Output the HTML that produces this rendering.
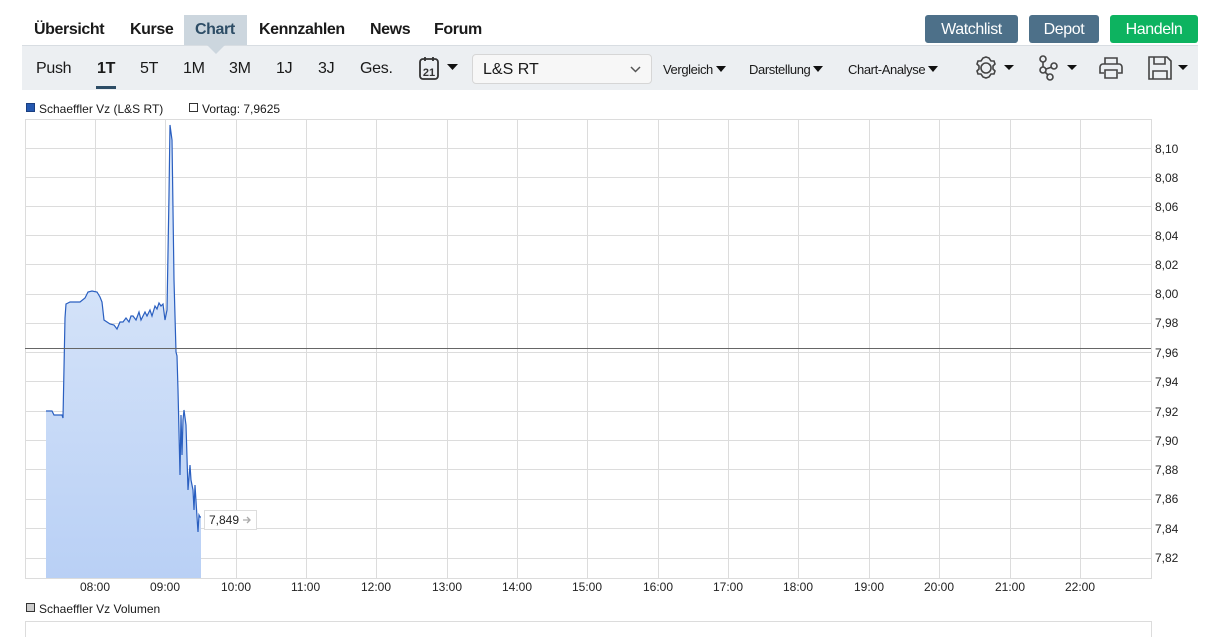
<!DOCTYPE html>
<html><head><meta charset="utf-8"><style>
*{margin:0;padding:0;box-sizing:border-box}
body{width:1208px;height:637px;background:#fff;font-family:"Liberation Sans",sans-serif;position:relative;overflow:hidden;color:#1a1a1a}
.a{position:absolute;white-space:nowrap}
.nav{font-size:16px;font-weight:bold;top:21px;letter-spacing:-0.4px}
.btn{top:15px;height:28px;border-radius:3px;color:#fff;font-size:16px;text-align:center;line-height:29px;letter-spacing:-0.4px}
.tb{top:60px;font-size:16px;letter-spacing:-0.3px}
.dd{top:62px;font-size:13px;letter-spacing:-0.4px}
.tri{display:inline-block;width:0;height:0;border-left:5px solid transparent;border-right:5px solid transparent;border-top:6px solid #111;margin-left:3px;vertical-align:2px}
.yl{font-size:12px;left:1155px;color:#222}
.xl{font-size:12px;top:580px;color:#222}
</style></head><body>
<div class="a" style="left:184px;top:15px;width:63px;height:31px;background:#ccd6de"></div>
<div class="a" style="left:207px;top:45px;width:0;height:0;border-left:9px solid transparent;border-right:9px solid transparent;border-top:9px solid #ccd6de;z-index:2"></div>
<div class="a nav" style="left:34px">Übersicht</div>
<div class="a nav" style="left:130px">Kurse</div>
<div class="a nav" style="left:195px;color:#2d4d66">Chart</div>
<div class="a nav" style="left:259px">Kennzahlen</div>
<div class="a nav" style="left:370px">News</div>
<div class="a nav" style="left:434px">Forum</div>
<div class="a btn" style="left:925px;width:93px;background:#4d7089">Watchlist</div>
<div class="a btn" style="left:1029px;width:70px;background:#4d7089">Depot</div>
<div class="a btn" style="left:1110px;width:88px;background:#0db360">Handeln</div>
<div class="a" style="left:22px;top:45px;width:1176px;height:45px;background:#eceff2;border-top:1px solid #d8dde2"></div>
<div class="a tb" style="left:36px">Push</div>
<div class="a tb" style="left:97px;font-weight:bold">1T</div>
<div class="a" style="left:96px;top:86px;width:20px;height:3px;background:#2d4d66"></div>
<div class="a tb" style="left:140px">5T</div>
<div class="a tb" style="left:183px">1M</div>
<div class="a tb" style="left:229px">3M</div>
<div class="a tb" style="left:276px">1J</div>
<div class="a tb" style="left:318px">3J</div>
<div class="a tb" style="left:360px">Ges.</div>
<svg class="a" style="left:418px;top:55px" width="45" height="28" viewBox="0 0 45 28"><rect x="2" y="4" width="18" height="20" rx="3" fill="none" stroke="#333" stroke-width="1.8"/><line x1="7" y1="2" x2="7" y2="6" stroke="#333" stroke-width="1.8"/><line x1="15" y1="2" x2="15" y2="6" stroke="#333" stroke-width="1.8"/><text x="11" y="21" font-size="11" font-weight="bold" text-anchor="middle" fill="#333" font-family="Liberation Sans">21</text><path d="M29 9h11l-5.5 6z" fill="#111"/></svg>
<div class="a" style="left:472px;top:54px;width:180px;height:30px;background:#f7f7f7;border:1px solid #d6d6d6;border-radius:4px;font-size:16px;line-height:29px;padding-left:10px">L&amp;S RT<svg style="position:absolute;right:10px;top:11px" width="11" height="7"><path d="M1 1l4.5 4.5L10 1" fill="none" stroke="#555" stroke-width="1.5"/></svg></div>
<div class="a dd" style="left:663px">Vergleich<span class="tri"></span></div>
<div class="a dd" style="left:749px">Darstellung<span class="tri"></span></div>
<div class="a dd" style="left:848px">Chart-Analyse<span class="tri"></span></div>
<svg class="a" style="left:970px;top:54px" width="225" height="30" viewBox="0 0 225 30">
<g fill="none" stroke="#444" stroke-width="1.6">
<path d="M16 3l3 1 2 3 3 0 1 3-2 2 0 3 2 2-1 3-3 0-2 3-3 1-3-1-2-3-3 0-1-3 2-2 0-3-2-2 1-3 3 0 2-3z"/><circle cx="16" cy="14" r="5"/>
<circle cx="73" cy="5" r="3"/><circle cx="73" cy="16" r="3"/><circle cx="80" cy="23" r="3"/><circle cx="84" cy="12" r="3"/><path d="M73 8v5M75 18l3 3M76 15l6-2"/>
<path d="M135 10V4h12v6M133 10h16a3 3 0 0 1 3 3v6h-4M134 19h-4v-6a3 3 0 0 1 3-3M135 16h12v8h-12z"/>
<path d="M179 3h18l4 4v18h-22zM184 3v7h11V3M183 25v-8h14v8"/>
</g>
<path d="M34 11h10l-5 5zM97 11h10l-5 5zM208 11h10l-5 5z" fill="#111"/></svg>
<div class="a" style="left:26px;top:103px;width:9px;height:9px;background:#2458b0;border:1px solid #1a3f80"></div>
<div class="a" style="left:39px;top:102px;font-size:12px">Schaeffler Vz (L&amp;S RT)</div>
<div class="a" style="left:189px;top:103px;width:9px;height:9px;border:1px solid #333"></div>
<div class="a" style="left:202px;top:102px;font-size:12px">Vortag: 7,9625</div>
<svg class="a" style="left:0;top:0" width="1208" height="637">
<defs><linearGradient id="g" x1="0" y1="0" x2="0" y2="1"><stop offset="0" stop-color="#e3edfb"/><stop offset="1" stop-color="#b9d0f5"/></linearGradient></defs>
<g stroke="#dcdcdc" stroke-width="1">
<rect x="25.5" y="119.5" width="1126" height="459" fill="none"/>
<path d="M25 148.5H1151M25 177.5H1151M25 206.5H1151M25 235.5H1151M25 264.5H1151M25 294.5H1151M25 323.5H1151M25 352.5H1151M25 381.5H1151M25 411.5H1151M25 440.5H1151M25 469.5H1151M25 499.5H1151M25 528.5H1151M25 558.5H1151"/>
<path d="M95.5 119V578M165.5 119V578M236.5 119V578M306.5 119V578M376.5 119V578M447.5 119V578M517.5 119V578M587.5 119V578M658.5 119V578M728.5 119V578M798.5 119V578M869.5 119V578M939.5 119V578M1010.5 119V578M1080.5 119V578"/>
</g>
<path d="M46 411L52 411L54 415L62 415L63 418L65 318L66 304L68 303L70 302L80 302L85 298L88 292L92 291L97 292L100 297L102 302L104 320L107 322L110 324L114 325L117 329L120 322L123 322L126 318L129 322L131 316L133 316L136 320L139 312L141 320L145 312L147 316L150 310L152 316L155 306L157 309L159 303L161 306L163 304L165 320L167 310L169 195L170 125L172 140L174 280L176 352L177 356L178 390L180 475L181 415L182 455L183 420L184 410L186 425L188 490L190 465L191 480L193 490L194 510L195 485L197 517L198 532L199 515L200 517L201 517L201 578L46 578Z" fill="url(#g)" stroke="none"/>
<path d="M46 411L52 411L54 415L62 415L63 418L65 318L66 304L68 303L70 302L80 302L85 298L88 292L92 291L97 292L100 297L102 302L104 320L107 322L110 324L114 325L117 329L120 322L123 322L126 318L129 322L131 316L133 316L136 320L139 312L141 320L145 312L147 316L150 310L152 316L155 306L157 309L159 303L161 306L163 304L165 320L167 310L169 195L170 125L172 140L174 280L176 352L177 356L178 390L180 475L181 415L182 455L183 420L184 410L186 425L188 490L190 465L191 480L193 490L194 510L195 485L197 517L198 532L199 515L200 517L201 517" fill="none" stroke="#2a5fc0" stroke-width="1.2"/>
<line x1="25" y1="348.5" x2="1151" y2="348.5" stroke="#666" stroke-width="1"/>
<rect x="204.5" y="510.5" width="52" height="19" fill="#fff" stroke="#ddd"/>
<text x="209" y="524" font-size="12" fill="#222" font-family="Liberation Sans">7,849</text>
<path d="M243 520h6M247 517l3 3-3 3" stroke="#aaa" fill="none" stroke-width="1.3"/>
<rect x="25.5" y="621.5" width="1126" height="20" fill="none" stroke="#dcdcdc"/>
</svg>
<div class="a yl" style="top:142px">8,10</div><div class="a yl" style="top:171px">8,08</div><div class="a yl" style="top:200px">8,06</div><div class="a yl" style="top:229px">8,04</div><div class="a yl" style="top:258px">8,02</div><div class="a yl" style="top:287px">8,00</div><div class="a yl" style="top:316px">7,98</div><div class="a yl" style="top:346px">7,96</div><div class="a yl" style="top:375px">7,94</div><div class="a yl" style="top:405px">7,92</div><div class="a yl" style="top:434px">7,90</div><div class="a yl" style="top:463px">7,88</div><div class="a yl" style="top:492px">7,86</div><div class="a yl" style="top:522px">7,84</div><div class="a yl" style="top:551px">7,82</div>
<div class="a xl" style="left:80px">08:00</div><div class="a xl" style="left:150px">09:00</div><div class="a xl" style="left:221px">10:00</div><div class="a xl" style="left:291px">11:00</div><div class="a xl" style="left:361px">12:00</div><div class="a xl" style="left:432px">13:00</div><div class="a xl" style="left:502px">14:00</div><div class="a xl" style="left:572px">15:00</div><div class="a xl" style="left:643px">16:00</div><div class="a xl" style="left:713px">17:00</div><div class="a xl" style="left:783px">18:00</div><div class="a xl" style="left:854px">19:00</div><div class="a xl" style="left:924px">20:00</div><div class="a xl" style="left:995px">21:00</div><div class="a xl" style="left:1065px">22:00</div>
<div class="a" style="left:26px;top:603px;width:9px;height:9px;background:#ccc;border:1px solid #333"></div>
<div class="a" style="left:39px;top:602px;font-size:12px">Schaeffler Vz Volumen</div>
</body></html>
